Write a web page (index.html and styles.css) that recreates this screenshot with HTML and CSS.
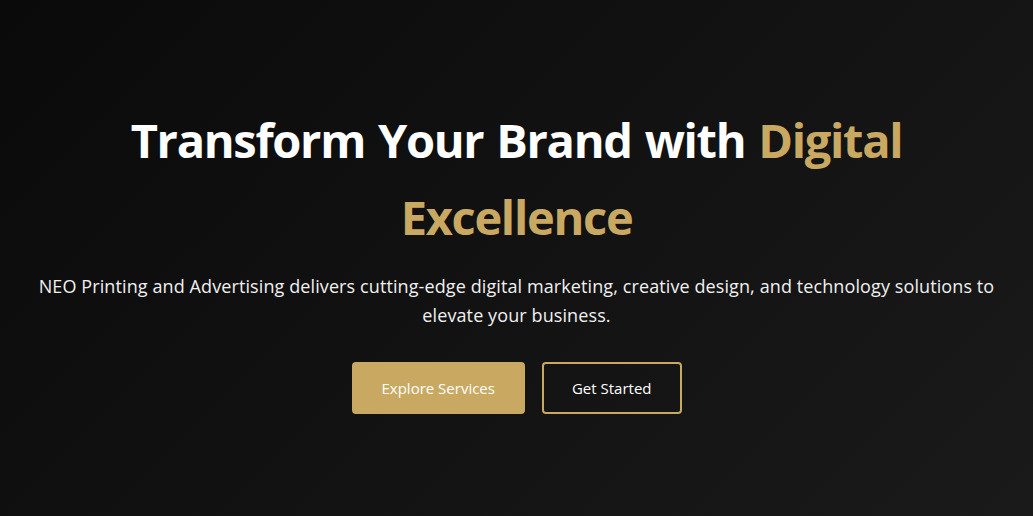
FILE: index.html
```html
<!DOCTYPE html>
<html lang="en">
<head>
<meta charset="utf-8">
<title>NEO Printing and Advertising</title>
<link rel="stylesheet" href="styles.css">
</head>
<body>
<section class="hero">
  <div class="hero-content">
    <h1 class="hero-title">Transform Your Brand with <span class="accent">Digital</span> <span class="accent">Excellence</span></h1>
    <p class="hero-text">NEO Printing and Advertising delivers cutting-edge digital marketing, creative design, and technology solutions to elevate your business.</p>
    <div class="hero-actions">
      <a class="btn btn-primary" href="#">Explore Services</a>
      <a class="btn btn-outline" href="#">Get Started</a>
    </div>
  </div>
</section>
</body>
</html>
```
FILE: styles.css
```css
* { box-sizing: border-box; margin: 0; padding: 0; }
html, body { height: 100%; }
body {
  font-family: "Open Sans", "Noto Sans", sans-serif;
  line-height: 1.6;
  color: #ffffff;
  background: #0a0a0a;
}
.hero {
  min-height: 100vh;
  display: flex;
  align-items: center;
  justify-content: center;
  background: linear-gradient(135deg, #0a0a0a 0%, #1a1a1a 100%);
  text-align: center;
  padding: 0 20px;
}
.hero-content {
  max-width: 1000px;
  display: flex;
  flex-direction: column;
  align-items: center;
}
.hero-title {
  font-size: 47px;
  font-weight: 700;
  line-height: 77px;
  letter-spacing: -1.3px;
  word-spacing: 2px;
  margin-bottom: 16px;
  max-width: 820px;
}
.accent { color: #c9a962; }
.hero-text {
  font-size: 18px;
  letter-spacing: 0.1px;
  color: #f0f0f0;
  margin-bottom: 32px;
  max-width: 980px;
}
.hero-actions {
  display: flex;
  gap: 17px;
  justify-content: center;
}
.btn {
  display: inline-block;
  font-size: 15px;
  line-height: 24px;
  padding: 12px 28px;
  border: 2px solid #c9a962;
  border-radius: 4px;
  color: #ffffff;
  text-decoration: none;
}
.btn-primary { background: #c9a962; }
.btn-outline { background: transparent; }
```
